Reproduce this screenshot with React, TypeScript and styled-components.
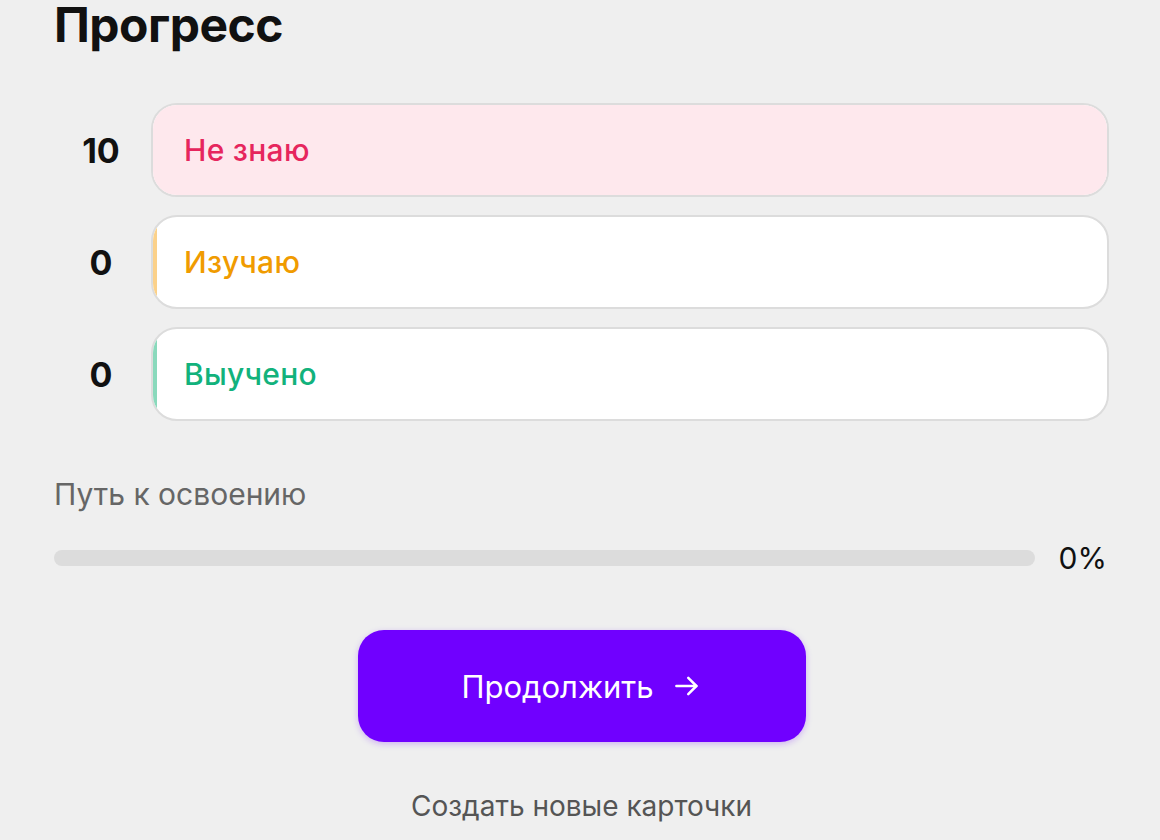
import { FC } from "react";
import styled, { createGlobalStyle } from "styled-components";

const GlobalStyle = createGlobalStyle`
  body {
    margin: 0;
    background: #efefef;
    font-family: Inter, "Noto Sans", sans-serif;
  }
`;

interface StatusRow {
  id: string;
  label: string;
  count: number;
  color: string;
  fill: string;
  accent: string;
}

const rows: StatusRow[] = [
  { id: "unknown", label: "Не знаю", count: 10, color: "#e6265d", fill: "#fee8ed", accent: "#f4a3b4" },
  { id: "learning", label: "Изучаю", count: 0, color: "#f09b00", fill: "#fff4dc", accent: "#fbd18a" },
  { id: "learned", label: "Выучено", count: 0, color: "#12b27c", fill: "#e2f7ef", accent: "#8ad9bc" },
];

const total = rows.reduce((s, r) => s + r.count, 0);

const ArrowIcon: FC = () => (
  <svg width="30" height="30" viewBox="0 0 24 24" fill="none" stroke="currentColor" strokeWidth="2" strokeLinecap="round" strokeLinejoin="round">
    <path d="M3.5 12h16" />
    <path d="M13 5.5l6.5 6.5-6.5 6.5" />
  </svg>
);

const App: FC = () => {
  const learned = rows.find((r) => r.id === "learned")?.count ?? 0;
  const percent = total ? Math.round((learned / total) * 100) : 0;

  return (
    <>
      <GlobalStyle />
      <Page>
        <Title>Прогресс</Title>

        <RowList>
          {rows.map((row) => (
            <Row key={row.id}>
              <Count>{row.count}</Count>
              <Pill>
                <Fill
                  $fill={row.fill}
                  $accent={row.accent}
                  style={{ width: `${total ? (row.count / total) * 100 : 0}%` }}
                />
                <PillLabel $color={row.color}>{row.label}</PillLabel>
              </Pill>
            </Row>
          ))}
        </RowList>

        <PathLabel>Путь к освоению</PathLabel>
        <BarRow>
          <Track>
            <TrackFill style={{ width: `${percent}%` }} />
          </Track>
          <Percent>{percent}%</Percent>
        </BarRow>

        <ButtonWrap>
          <ContinueButton>
            Продолжить
            <ArrowIcon />
          </ContinueButton>
        </ButtonWrap>

        <CreateLink>Создать новые карточки</CreateLink>
      </Page>
    </>
  );
};

export default App;

const Page = styled.div`
  padding: 0 51px 0 54px;
  display: flex;
  flex-direction: column;
`;

const Title = styled.h1`
  margin: 0;
  font-size: 48px;
  line-height: 50px;
  font-weight: 700;
  color: #111;
  letter-spacing: -0.5px;
`;

const RowList = styled.div`
  margin-top: 53px;
  display: flex;
  flex-direction: column;
  gap: 18px;
`;

const Row = styled.div`
  display: grid;
  grid-template-columns: 94px 1fr;
  column-gap: 3px;
  align-items: center;
`;

const Count = styled.div`
  text-align: center;
  font-size: 34px;
  font-weight: 700;
  color: #111;
`;

const Pill = styled.div`
  position: relative;
  height: 94px;
  box-sizing: border-box;
  border: 2px solid #dcdcdc;
  border-radius: 26px;
  background: #fff;
  overflow: hidden;
  display: flex;
  align-items: center;
`;

const Fill = styled.div<{ $fill: string; $accent: string }>`
  position: absolute;
  left: 0;
  top: 0;
  bottom: 0;
  background: ${({ $fill }) => $fill};
  border-right: 4px solid ${({ $accent }) => $accent};
`;

const PillLabel = styled.span<{ $color: string }>`
  position: relative;
  padding-left: 31px;
  font-size: 30px;
  font-weight: 500;
  letter-spacing: 0.3px;
  color: ${({ $color }) => $color};
`;

const PathLabel = styled.div`
  margin-top: 55px;
  font-size: 30px;
  line-height: 36px;
  color: #666;
`;

const BarRow = styled.div`
  margin-top: 28px;
  display: flex;
  align-items: center;
  gap: 24px;
`;

const Track = styled.div`
  flex: 1;
  height: 16px;
  border-radius: 8px;
  background: #dcdcdc;
  overflow: hidden;
`;

const TrackFill = styled.div`
  height: 100%;
  background: #12b27c;
`;

const Percent = styled.div`
  font-size: 30px;
  line-height: 36px;
  color: #111;
  margin-right: 2px;
`;

const ButtonWrap = styled.div`
  margin-top: 54px;
  display: flex;
  justify-content: center;
`;

const ContinueButton = styled.button`
  width: 448px;
  height: 112px;
  border: none;
  border-radius: 26px;
  background: #7000ff;
  color: #fff;
  font-family: inherit;
  font-size: 31px;
  display: flex;
  align-items: center;
  justify-content: center;
  gap: 18px;
  box-shadow: 0 2px 6px rgba(112, 0, 255, 0.25);
  cursor: pointer;
`;

const CreateLink = styled.div`
  margin-top: 47px;
  text-align: center;
  font-size: 28px;
  line-height: 34px;
  color: #555;
`;
